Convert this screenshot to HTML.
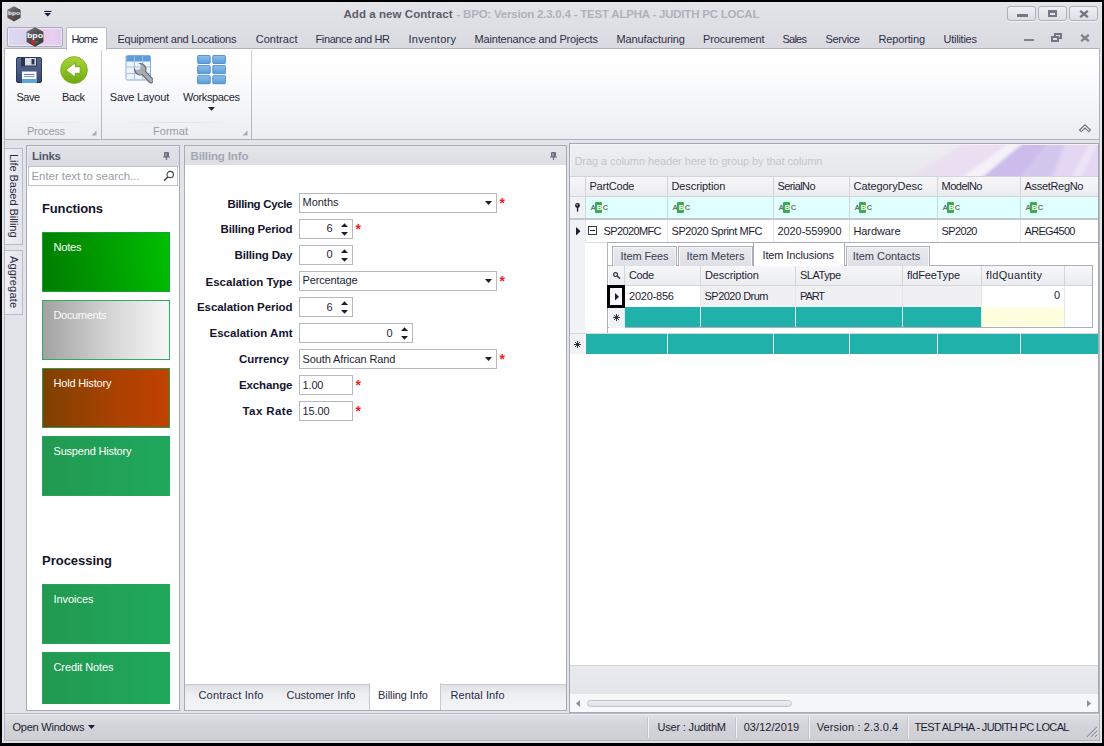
<!DOCTYPE html>
<html lang="en">
<head>
<meta charset="utf-8">
<title>Add a new Contract - BPO</title>
<style>
html,body{margin:0;padding:0;background:#000;}
body{width:1104px;height:746px;overflow:hidden;font-family:"Liberation Sans",sans-serif;font-size:11px;color:#1e1e32;}
#root{position:relative;width:1104px;height:746px;background:#000;overflow:hidden;}
#root div,#root span,#root svg{position:absolute;box-sizing:border-box;}
.tile{left:42px;width:129px;height:60px;border:1px solid #2aa05c;}
.fld{background:#fff;border:1px solid #b6b9c2;height:20px;}
.hdr{background:linear-gradient(#f7f7f9,#ebecf0);}
.vl{width:1px;background:#d3d5db;}
.teal{background:#20b2aa;}
</style>
</head>
<body>
<div id="root">
<div style="left:2px;top:2px;width:1100px;height:741px;background:#e3e4e9;border:1px solid #e6e7eb;border-bottom-color:#dddee3;"></div>
<div style="left:4px;top:48px;width:1096px;height:693px;border:1px solid #b4b6c0;border-top:none;"></div>
<div style="left:3px;top:3px;width:1098px;height:46px;background:linear-gradient(#e3e4e8,#d9dae0);"></div>
<svg style="left:6px;top:6px" width="16" height="16" viewBox="0 0 16 16"><defs><linearGradient id="hx" x1="0" y1="0" x2="0.6" y2="1"><stop offset="0" stop-color="#868686"/><stop offset="0.45" stop-color="#5e5e5e"/><stop offset="1" stop-color="#454545"/></linearGradient></defs><polygon points="8,0.3 14.6,3.8 14.6,11.8 8,15.5 1.4,11.8 1.4,3.8" fill="url(#hx)"/><text x="8" y="8.9" text-anchor="middle" font-family="Liberation Sans,sans-serif" font-weight="bold" font-size="4.8" textLength="12" lengthAdjust="spacingAndGlyphs" fill="#f2f2f2">bpo</text><rect x="4.6" y="10.6" width="2.4" height="1.8" fill="#b8323a"/></svg>
<svg style="left:44px;top:10px" width="8" height="7" viewBox="0 0 8 7"><rect x="0.2" y="0.9" width="7.2" height="1.1" fill="#1c1c3a"/><polygon points="0.4,2.9 7,2.9 3.7,6.6" fill="#1c1c3a"/></svg>
<span style="position:absolute;top:6px;height:16px;line-height:16px;font-size:11.5px;white-space:pre;color:#5a5e6b;font-weight:bold;left:343.5px;letter-spacing:0.060px;">Add a new Contract</span><span style="position:absolute;top:6px;height:16px;line-height:16px;font-size:11.5px;white-space:pre;color:#afb2bb;font-weight:bold;left:456.5px;letter-spacing:-0.215px;">- BPO: Version 2.3.0.4 - TEST ALPHA - JUDITH PC LOCAL</span><div style="left:1007px;top:6px;width:29px;height:15px;border:1px solid #adafba;border-radius:3px;background:linear-gradient(#eeeff2,#dddee4);box-shadow:0 1px 0 #f2f3f5;"></div>
<div style="left:1038px;top:6px;width:29px;height:15px;border:1px solid #adafba;border-radius:3px;background:linear-gradient(#eeeff2,#dddee4);box-shadow:0 1px 0 #f2f3f5;"></div>
<div style="left:1069px;top:6px;width:29px;height:15px;border:1px solid #adafba;border-radius:3px;background:linear-gradient(#eeeff2,#dddee4);box-shadow:0 1px 0 #f2f3f5;"></div>
<div style="left:1016.5px;top:14px;width:11px;height:3px;background:#747783;"></div>
<div style="left:1048px;top:10px;width:9px;height:7px;border:2px solid #747783;border-top-width:3px;"></div>
<svg style="left:1078.5px;top:9.5px" width="10" height="8" viewBox="0 0 10 8"><path d="M1.2 0.8 L8.8 7.2 M8.8 0.8 L1.2 7.2" stroke="#747783" stroke-width="2.3"/></svg>
<div style="left:1024px;top:38.5px;width:9.5px;height:2.5px;background:#7f828e;"></div>
<svg style="left:1051px;top:33px" width="11" height="9" viewBox="0 0 11 9"><rect x="4" y="1" width="6" height="4" fill="none" stroke="#747783" stroke-width="2"/><rect x="1" y="4" width="6" height="4" fill="#dddee4" stroke="#747783" stroke-width="2"/></svg>
<svg style="left:1080px;top:34px" width="10" height="8" viewBox="0 0 10 8"><path d="M1.2 0.8 L8.8 7.2 M8.8 0.8 L1.2 7.2" stroke="#7f828e" stroke-width="2.3"/></svg>
<div style="left:4px;top:48px;width:1096px;height:92px;background:linear-gradient(#ffffff 0%,#fdfdfe 25%,#f6f7f9 55%,#ecedf1 100%);border:1px solid #b0b2bc;border-radius:0 0 2px 2px;"></div>
<div style="left:7px;top:27px;width:56px;height:20px;border:1px solid #a9aab9;border-radius:2px;background:linear-gradient(90deg,#ddd9f2 0%,#dbd2ef 38%,#e9ccf0 62%,#e6cff0 85%,#dccaed 100%);box-shadow:inset 0 0 0 1px rgba(255,255,255,.45);"></div>
<svg style="left:26px;top:27px" width="18" height="20" viewBox="0 0 18 20"><defs><linearGradient id="hx2" x1="0" y1="0" x2="0.5" y2="1"><stop offset="0" stop-color="#7c7c7c"/><stop offset="0.4" stop-color="#555"/><stop offset="1" stop-color="#3c3c3c"/></linearGradient></defs><polygon points="9,0.3 17.4,4.8 17.4,15 9,19.8 0.6,15 0.6,4.8" fill="url(#hx2)"/><text x="9" y="11" text-anchor="middle" font-family="Liberation Sans,sans-serif" font-weight="bold" font-size="6.8" textLength="16" lengthAdjust="spacingAndGlyphs" fill="#ffffff">bpo</text><rect x="5" y="13" width="3.6" height="3.2" fill="#c42a36"/><rect x="9" y="14" width="3.4" height="2" fill="#2f7c68"/><rect x="6.5" y="16.2" width="3" height="1.6" fill="#c42a36"/></svg>
<div style="left:66px;top:27px;width:41px;height:23px;background:#fff;border:1px solid #b9bbc5;border-bottom:none;border-radius:2px 2px 0 0;"></div>
<span style="position:absolute;top:31px;height:16px;line-height:16px;font-size:11px;white-space:pre;color:#1e1e3c;left:71.5px;letter-spacing:-0.948px;">Home</span><span style="position:absolute;top:31px;height:16px;line-height:16px;font-size:11px;white-space:pre;color:#2f2f48;left:117.5px;letter-spacing:-0.234px;">Equipment and Locations</span><span style="position:absolute;top:31px;height:16px;line-height:16px;font-size:11px;white-space:pre;color:#2f2f48;left:255.7px;letter-spacing:0.032px;">Contract</span><span style="position:absolute;top:31px;height:16px;line-height:16px;font-size:11px;white-space:pre;color:#2f2f48;left:315.5px;letter-spacing:-0.385px;">Finance and HR</span><span style="position:absolute;top:31px;height:16px;line-height:16px;font-size:11px;white-space:pre;color:#2f2f48;left:408.5px;letter-spacing:0.281px;">Inventory</span><span style="position:absolute;top:31px;height:16px;line-height:16px;font-size:11px;white-space:pre;color:#2f2f48;left:474.5px;letter-spacing:-0.160px;">Maintenance and Projects</span><span style="position:absolute;top:31px;height:16px;line-height:16px;font-size:11px;white-space:pre;color:#2f2f48;left:616.5px;letter-spacing:-0.102px;">Manufacturing</span><span style="position:absolute;top:31px;height:16px;line-height:16px;font-size:11px;white-space:pre;color:#2f2f48;left:703px;letter-spacing:-0.148px;">Procurement</span><span style="position:absolute;top:31px;height:16px;line-height:16px;font-size:11px;white-space:pre;color:#2f2f48;left:782.5px;letter-spacing:-0.758px;">Sales</span><span style="position:absolute;top:31px;height:16px;line-height:16px;font-size:11px;white-space:pre;color:#2f2f48;left:825.5px;letter-spacing:-0.365px;">Service</span><span style="position:absolute;top:31px;height:16px;line-height:16px;font-size:11px;white-space:pre;color:#2f2f48;left:878.5px;letter-spacing:-0.150px;">Reporting</span><span style="position:absolute;top:31px;height:16px;line-height:16px;font-size:11px;white-space:pre;color:#2f2f48;left:943.5px;letter-spacing:-0.244px;">Utilities</span><div style="left:101px;top:50px;width:1px;height:89px;background:linear-gradient(#d3d5db,#bfc1c9 40%,#b2b4be);"></div>
<div style="left:251px;top:50px;width:1px;height:89px;background:linear-gradient(#d3d5db,#bfc1c9 40%,#b2b4be);"></div>
<div style="left:16px;top:122px;width:75px;height:1px;background:linear-gradient(90deg,#f3f4f6,#dfe1e6 50%,#f3f4f6);"></div>
<div style="left:112px;top:122px;width:130px;height:1px;background:linear-gradient(90deg,#f3f4f6,#dfe1e6 50%,#f3f4f6);"></div>
<span style="position:absolute;top:123px;height:16px;line-height:16px;font-size:11px;white-space:pre;color:#9a9da8;left:27px;letter-spacing:-0.292px;">Process</span><span style="position:absolute;top:123px;height:16px;line-height:16px;font-size:11px;white-space:pre;color:#9a9da8;left:153px;letter-spacing:0.031px;">Format</span><svg style="left:91px;top:130px" width="6" height="6" viewBox="0 0 6 6"><polygon points="5.5,0.5 5.5,5.5 0.5,5.5" fill="#a9acb6"/></svg>
<svg style="left:242px;top:130px" width="6" height="6" viewBox="0 0 6 6"><polygon points="5.5,0.5 5.5,5.5 0.5,5.5" fill="#a9acb6"/></svg>
<svg style="left:16px;top:57px" width="26" height="26" viewBox="0 0 26 26"><defs><linearGradient id="gs" x1="0" y1="0" x2="0" y2="1"><stop offset="0" stop-color="#55678f"/><stop offset="0.5" stop-color="#4a5b85"/><stop offset="1" stop-color="#36456c"/></linearGradient></defs><rect x="0.5" y="0.5" width="25" height="25" rx="1.5" fill="url(#gs)" stroke="#2c3858"/><rect x="5" y="0.5" width="16" height="9" fill="#2a3452"/><rect x="9" y="1" width="11" height="7.5" fill="#d9dee6"/><rect x="15.5" y="2" width="3" height="5.5" fill="#2a3452"/><rect x="6" y="14.5" width="14.5" height="11" fill="#fafbfd"/><rect x="6" y="22" width="14.5" height="3.5" fill="#5aa6dd"/><rect x="8" y="17" width="10.5" height="1" fill="#8070c4"/><rect x="8" y="19" width="10.5" height="1" fill="#6f9fd8"/></svg>
<span style="position:absolute;top:89px;height:16px;line-height:16px;font-size:11px;white-space:pre;color:#1e1e32;left:16.5px;letter-spacing:-0.526px;">Save</span><svg style="left:60px;top:56px" width="28" height="28" viewBox="0 0 28 28"><defs><linearGradient id="gb" x1="0" y1="0" x2="0" y2="1"><stop offset="0" stop-color="#a9d23a"/><stop offset="0.5" stop-color="#8dc21f"/><stop offset="1" stop-color="#6ea612"/></linearGradient></defs><circle cx="14" cy="14" r="13.4" fill="url(#gb)" stroke="#79ad22" stroke-width="0.8"/><polygon points="5.8,14 15.2,6.8 15.2,10.7 20.2,10.7 20.2,17.3 15.2,17.3 15.2,21.2" fill="#ffffff" stroke="#6f9f28" stroke-width="0.9" stroke-linejoin="round"/></svg>
<span style="position:absolute;top:89px;height:16px;line-height:16px;font-size:11px;white-space:pre;color:#1e1e32;left:62px;letter-spacing:-0.490px;">Back</span><svg style="left:125px;top:54px" width="30" height="31" viewBox="0 0 30 31"><defs><mask id="wm"><rect x="0" y="0" width="30" height="31" fill="#fff"/><circle cx="12.4" cy="12.6" r="3.3" fill="#000"/></mask></defs><rect x="1" y="1.5" width="24.5" height="24.5" rx="1.5" fill="#eef4fb" stroke="#86aedd"/><rect x="1.5" y="2" width="23.5" height="5.5" fill="#5d9ddb"/><path d="M1.5 13H25M1.5 19.5H25M9.4 2V25.5M17.7 2V25.5" stroke="#9fc0e6" stroke-width="1" fill="none"/><g mask="url(#wm)"><circle cx="15.3" cy="15.3" r="6.2" fill="#5f636c"/><path d="M16 16 L26 26.5" stroke="#5f636c" stroke-width="5.6" stroke-linecap="round"/><circle cx="15.3" cy="15.3" r="5.1" fill="#a7abb3"/><path d="M16 16 L26 26.5" stroke="#a7abb3" stroke-width="3.6" stroke-linecap="round"/><path d="M13 18.5 L24 29" stroke="#c9ccd2" stroke-width="1" stroke-linecap="round" opacity=".7"/></g></svg>
<span style="position:absolute;top:89px;height:16px;line-height:16px;font-size:11px;white-space:pre;color:#1e1e32;left:109.8px;letter-spacing:-0.166px;">Save Layout</span><svg style="left:197px;top:55px" width="29" height="30" viewBox="0 0 29 30"><defs><linearGradient id="gw" x1="0" y1="0" x2="0" y2="1"><stop offset="0" stop-color="#8fbfe9"/><stop offset="1" stop-color="#5a9bd8"/></linearGradient></defs><rect x="0.6" y="0.5" width="12.6" height="8" rx="0.8" fill="url(#gw)" stroke="#4a8cd0" stroke-width="0.9"/><rect x="15.8" y="0.5" width="12.6" height="8" rx="0.8" fill="url(#gw)" stroke="#4a8cd0" stroke-width="0.9"/><rect x="0.6" y="10.6" width="12.6" height="8" rx="0.8" fill="url(#gw)" stroke="#4a8cd0" stroke-width="0.9"/><rect x="15.8" y="10.6" width="12.6" height="8" rx="0.8" fill="url(#gw)" stroke="#4a8cd0" stroke-width="0.9"/><rect x="0.6" y="20.7" width="12.6" height="8" rx="0.8" fill="url(#gw)" stroke="#4a8cd0" stroke-width="0.9"/><rect x="15.8" y="20.7" width="12.6" height="8" rx="0.8" fill="url(#gw)" stroke="#4a8cd0" stroke-width="0.9"/></svg>
<span style="position:absolute;top:89px;height:16px;line-height:16px;font-size:11px;white-space:pre;color:#1e1e32;left:183px;letter-spacing:-0.370px;">Workspaces</span><svg style="left:208px;top:107px" width="7" height="4" viewBox="0 0 7 4"><polygon points="0,0 7,0 3.5,3.8" fill="#1c1c2e"/></svg>
<svg style="left:1078px;top:123px" width="14" height="11" viewBox="0 0 14 11"><path d="M1.5 7 L7 1.8 L12.5 7 L10.8 8.6 L7 5 L3.2 8.6 Z" fill="#f4f4f6" stroke="#6c6f7b" stroke-width="1.1"/></svg>
<div style="left:5px;top:148px;width:18px;height:97px;background:linear-gradient(90deg,#eeeff2,#e4e6ec);border:1px solid #b9bbc5;border-left:none;"></div>
<div style="left:5px;top:250px;width:18px;height:65px;background:linear-gradient(90deg,#eeeff2,#e4e6ec);border:1px solid #b9bbc5;border-left:none;"></div>
<span style="position:absolute;top:153.7px;height:16px;line-height:16px;font-size:11px;white-space:pre;color:#2a2a44;left:21.5px;letter-spacing:-0.052px;transform-origin:0 0;transform:rotate(90deg);">Life Based Billing</span><span style="position:absolute;top:256.2px;height:16px;line-height:16px;font-size:11px;white-space:pre;color:#2a2a44;left:21.5px;letter-spacing:0.154px;transform-origin:0 0;transform:rotate(90deg);">Aggregate</span><div style="left:26px;top:145px;width:154px;height:566px;background:#fff;border:1px solid #a8aab4;"></div>
<div style="left:27px;top:146px;width:152px;height:20px;background:linear-gradient(#e1e2e7,#dadbe0);border-top:1px solid #ececf0;border-left:1px solid #e9e9ee;"></div>
<span style="position:absolute;top:148px;height:16px;line-height:16px;font-size:11.5px;white-space:pre;color:#52566a;font-weight:bold;left:32px;letter-spacing:-0.262px;">Links</span><svg style="left:163px;top:152px" width="7" height="8" viewBox="0 0 7 8"><path d="M1.5 0.5H5.5V4.5H1.5Z" fill="#9498a6" stroke="#6a6e80" stroke-width="1"/><path d="M4.5 0.5V4.5M0 5H7M3.5 5V8" stroke="#6a6e80" stroke-width="1.2" fill="none"/></svg>
<div style="left:28px;top:166px;width:150px;height:20px;background:#fff;border:1px solid #c0c2cb;"></div>
<span style="position:absolute;top:168px;height:16px;line-height:16px;font-size:11.5px;white-space:pre;color:#9a9da8;left:31.5px;letter-spacing:-0.060px;">Enter text to search...</span><svg style="left:163px;top:170px" width="12" height="12" viewBox="0 0 12 12"><circle cx="7.2" cy="4.6" r="3.2" fill="none" stroke="#3a3c48" stroke-width="1.1"/><path d="M4.9 7 L1 10.8" stroke="#3a3c48" stroke-width="1.3"/></svg>
<span style="position:absolute;top:201px;height:16px;line-height:16px;font-size:13px;white-space:pre;color:#14142e;font-weight:bold;left:42px;letter-spacing:-0.139px;">Functions</span><div style="left:42px;top:232px;width:128px;height:60px;background:linear-gradient(80deg,#007c00 0%,#00a000 55%,#00c000 100%);border:1px solid #14a03c;"></div>
<span style="position:absolute;top:239px;height:16px;line-height:16px;font-size:11px;white-space:pre;color:#ffffff;left:53.5px;letter-spacing:-0.188px;">Notes</span><div style="left:42px;top:300px;width:128px;height:60px;background:linear-gradient(90deg,#a2a2a2 0%,#d6d6d6 55%,#f6f6f6 100%);border:1px solid #35a868;"></div>
<span style="position:absolute;top:307px;height:16px;line-height:16px;font-size:11px;white-space:pre;color:#fbfbfb;left:53.5px;letter-spacing:-0.330px;">Documents</span><div style="left:42px;top:368px;width:128px;height:60px;background:linear-gradient(90deg,#7e4100 0%,#a84100 55%,#c24100 100%);border:1px solid #2a9a56;"></div>
<span style="position:absolute;top:375px;height:16px;line-height:16px;font-size:11px;white-space:pre;color:#ffffff;left:53.5px;letter-spacing:-0.173px;">Hold History</span><div style="left:42px;top:436px;width:128px;height:60px;background:linear-gradient(90deg,#229951 0%,#1fa95d 100%);border:1px solid #27a25b;"></div>
<span style="position:absolute;top:443px;height:16px;line-height:16px;font-size:11px;white-space:pre;color:#ffffff;left:53.5px;letter-spacing:-0.194px;">Suspend History</span><span style="position:absolute;top:553px;height:16px;line-height:16px;font-size:13px;white-space:pre;color:#14142e;font-weight:bold;left:42px;letter-spacing:-0.010px;">Processing</span><div style="left:42px;top:584px;width:128px;height:60px;background:linear-gradient(90deg,#229951 0%,#1fa95d 100%);border:1px solid #27a25b;"></div>
<span style="position:absolute;top:591px;height:16px;line-height:16px;font-size:11px;white-space:pre;color:#ffffff;left:53.5px;letter-spacing:-0.051px;">Invoices</span><div style="left:42px;top:652px;width:128px;height:52px;background:linear-gradient(90deg,#229951 0%,#1fa95d 100%);border:1px solid #27a25b;border-bottom:none;"></div>
<span style="position:absolute;top:659px;height:16px;line-height:16px;font-size:11px;white-space:pre;color:#ffffff;left:53.5px;letter-spacing:-0.104px;">Credit Notes</span><div style="left:184px;top:145px;width:383px;height:566px;background:#fff;border:1px solid #a8aab4;"></div>
<div style="left:185px;top:146px;width:381px;height:19px;background:linear-gradient(#e4e5e9,#dedfe4);"></div>
<span style="position:absolute;top:148px;height:16px;line-height:16px;font-size:11.5px;white-space:pre;color:#a3a7b3;font-weight:bold;left:190.5px;letter-spacing:-0.128px;">Billing Info</span><svg style="left:549.5px;top:152px" width="7" height="8" viewBox="0 0 7 8"><path d="M1.5 0.5H5.5V4.5H1.5Z" fill="#9498a6" stroke="#6a6e80" stroke-width="1"/><path d="M4.5 0.5V4.5M0 5H7M3.5 5V8" stroke="#6a6e80" stroke-width="1.2" fill="none"/></svg>
<div style="left:185px;top:684px;width:381px;height:26px;background:linear-gradient(#dfe0e5,#eeeff2 40%,#f3f4f6);border-top:1px solid #c7c9d0;"></div>
<div style="left:369px;top:683px;width:72px;height:27px;background:#fff;border:1px solid #c7c9d0;border-top:none;border-bottom:none;"></div>
<span style="position:absolute;top:687px;height:16px;line-height:16px;font-size:11px;white-space:pre;color:#2a2a44;left:198.5px;letter-spacing:0.168px;">Contract Info</span><span style="position:absolute;top:687px;height:16px;line-height:16px;font-size:11px;white-space:pre;color:#2a2a44;left:286.5px;letter-spacing:-0.008px;">Customer Info</span><span style="position:absolute;top:687px;height:16px;line-height:16px;font-size:11px;white-space:pre;color:#2a2a44;left:378px;letter-spacing:-0.070px;">Billing Info</span><span style="position:absolute;top:687px;height:16px;line-height:16px;font-size:11px;white-space:pre;color:#2a2a44;left:450.5px;letter-spacing:0.080px;">Rental Info</span><span style="position:absolute;top:195.5px;height:16px;line-height:16px;font-size:11.5px;white-space:pre;color:#14142e;font-weight:bold;right:811.5px;letter-spacing:-0.336px;margin-right:0.336px;">Billing Cycle</span><div class="fld" style="left:299px;top:193px;width:198px;height:20px;"></div>
<span style="position:absolute;top:194.4px;height:16px;line-height:16px;font-size:11px;white-space:pre;color:#1e1e32;left:302.5px;letter-spacing:-0.016px;">Months</span><svg style="left:484.500px;top:201px" width="7" height="4" viewBox="0 0 7 4"><polygon points="0,0 7,0 3.5,4" fill="#1c1c2e"/></svg>
<span style="position:absolute;top:194.6px;height:16px;line-height:16px;font-size:14px;white-space:pre;color:#f21c1c;font-weight:bold;left:499.5px;">*</span><span style="position:absolute;top:220.6px;height:16px;line-height:16px;font-size:11.5px;white-space:pre;color:#14142e;font-weight:bold;right:811.5px;letter-spacing:-0.163px;margin-right:0.163px;">Billing Period</span><div class="fld" style="left:299px;top:219px;width:54px;height:20px;"></div>
<span style="position:absolute;top:220.4px;height:16px;line-height:16px;font-size:11px;white-space:pre;color:#1e1e32;right:771.5px;">6</span><svg style="left:341px;top:222.5px" width="7" height="13" viewBox="0 0 7 13"><polygon points="0,4 3.5,0.2 7,4" fill="#1c1c2e"/><polygon points="0,9 7,9 3.5,12.8" fill="#1c1c2e"/></svg>
<span style="position:absolute;top:220.6px;height:16px;line-height:16px;font-size:14px;white-space:pre;color:#f21c1c;font-weight:bold;left:355.5px;">*</span><span style="position:absolute;top:246.6px;height:16px;line-height:16px;font-size:11.5px;white-space:pre;color:#14142e;font-weight:bold;right:811.5px;letter-spacing:-0.144px;margin-right:0.144px;">Billing Day</span><div class="fld" style="left:299px;top:245px;width:54px;height:20px;"></div>
<span style="position:absolute;top:246.4px;height:16px;line-height:16px;font-size:11px;white-space:pre;color:#1e1e32;right:771.5px;">0</span><svg style="left:341px;top:248.5px" width="7" height="13" viewBox="0 0 7 13"><polygon points="0,4 3.5,0.2 7,4" fill="#1c1c2e"/><polygon points="0,9 7,9 3.5,12.8" fill="#1c1c2e"/></svg>
<span style="position:absolute;top:273.5px;height:16px;line-height:16px;font-size:11.5px;white-space:pre;color:#14142e;font-weight:bold;right:811.5px;letter-spacing:0.020px;margin-right:-0.020px;">Escalation Type</span><div class="fld" style="left:299px;top:271px;width:198px;height:20px;"></div>
<span style="position:absolute;top:272.4px;height:16px;line-height:16px;font-size:11px;white-space:pre;color:#1e1e32;left:302.5px;letter-spacing:-0.141px;">Percentage</span><svg style="left:484.500px;top:279px" width="7" height="4" viewBox="0 0 7 4"><polygon points="0,0 7,0 3.5,4" fill="#1c1c2e"/></svg>
<span style="position:absolute;top:272.6px;height:16px;line-height:16px;font-size:14px;white-space:pre;color:#f21c1c;font-weight:bold;left:499.5px;">*</span><span style="position:absolute;top:298.6px;height:16px;line-height:16px;font-size:11.5px;white-space:pre;color:#14142e;font-weight:bold;right:811.5px;letter-spacing:-0.063px;margin-right:0.063px;">Escalation Period</span><div class="fld" style="left:299px;top:297px;width:54px;height:20px;"></div>
<span style="position:absolute;top:298.9px;height:16px;line-height:16px;font-size:11px;white-space:pre;color:#1e1e32;right:771.5px;">6</span><svg style="left:341px;top:300.5px" width="7" height="13" viewBox="0 0 7 13"><polygon points="0,4 3.5,0.2 7,4" fill="#1c1c2e"/><polygon points="0,9 7,9 3.5,12.8" fill="#1c1c2e"/></svg>
<span style="position:absolute;top:324.6px;height:16px;line-height:16px;font-size:11.5px;white-space:pre;color:#14142e;font-weight:bold;right:811.5px;letter-spacing:0.026px;margin-right:-0.026px;">Escalation Amt</span><div class="fld" style="left:299px;top:323px;width:114px;height:20px;"></div>
<span style="position:absolute;top:324.9px;height:16px;line-height:16px;font-size:11px;white-space:pre;color:#1e1e32;right:711.5px;">0</span><svg style="left:401px;top:326.5px" width="7" height="13" viewBox="0 0 7 13"><polygon points="0,4 3.5,0.2 7,4" fill="#1c1c2e"/><polygon points="0,9 7,9 3.5,12.8" fill="#1c1c2e"/></svg>
<span style="position:absolute;top:350.6px;height:16px;line-height:16px;font-size:11.5px;white-space:pre;color:#14142e;font-weight:bold;right:815px;letter-spacing:-0.071px;margin-right:0.071px;">Currency</span><div class="fld" style="left:299px;top:349px;width:198px;height:20px;"></div>
<span style="position:absolute;top:350.9px;height:16px;line-height:16px;font-size:11px;white-space:pre;color:#1e1e32;left:302.5px;letter-spacing:-0.106px;">South African Rand</span><svg style="left:484.500px;top:357px" width="7" height="4" viewBox="0 0 7 4"><polygon points="0,0 7,0 3.5,4" fill="#1c1c2e"/></svg>
<span style="position:absolute;top:350.6px;height:16px;line-height:16px;font-size:14px;white-space:pre;color:#f21c1c;font-weight:bold;left:499.5px;">*</span><span style="position:absolute;top:376.6px;height:16px;line-height:16px;font-size:11.5px;white-space:pre;color:#14142e;font-weight:bold;right:811.5px;letter-spacing:-0.118px;margin-right:0.118px;">Exchange</span><div class="fld" style="left:299px;top:375px;width:54px;height:20px;"></div>
<span style="position:absolute;top:376.9px;height:16px;line-height:16px;font-size:11px;white-space:pre;color:#1e1e32;left:302.5px;letter-spacing:-0.141px;">1.00</span><span style="position:absolute;top:376.6px;height:16px;line-height:16px;font-size:14px;white-space:pre;color:#f21c1c;font-weight:bold;left:355.5px;">*</span><span style="position:absolute;top:402.6px;height:16px;line-height:16px;font-size:11.5px;white-space:pre;color:#14142e;font-weight:bold;right:811.5px;letter-spacing:0.415px;margin-right:-0.415px;">Tax Rate</span><div class="fld" style="left:299px;top:401px;width:54px;height:20px;"></div>
<span style="position:absolute;top:402.9px;height:16px;line-height:16px;font-size:11px;white-space:pre;color:#1e1e32;left:302.5px;letter-spacing:-0.133px;">15.00</span><span style="position:absolute;top:402.6px;height:16px;line-height:16px;font-size:14px;white-space:pre;color:#f21c1c;font-weight:bold;left:355.5px;">*</span><div style="left:569px;top:143px;width:530px;height:570px;background:#fff;border:1px solid #a6a8b3;"></div>
<div style="left:570px;top:144px;width:528px;height:32px;background:linear-gradient(#eeeff2,#e6e7eb);overflow:hidden;border-top:1px solid #f4f4f6;border-left:1px solid #f4f4f6;"><svg style="left:329px;top:-1px" width="198" height="32" viewBox="0 0 198 32"><defs><linearGradient id="gp" x1="0" y1="0" x2="1" y2="0"><stop offset="0" stop-color="#ecdff3" stop-opacity="0"/><stop offset="0.5" stop-color="#ecdff3" stop-opacity=".9"/><stop offset="1" stop-color="#e6daf3"/></linearGradient><filter id="bl" x="-10%" y="-30%" width="120%" height="160%"><feGaussianBlur stdDeviation="1.6"/></filter></defs><rect x="30" y="0" width="168" height="32" fill="url(#gp)"/><g filter="url(#bl)"><polygon points="70,-4 114,-4 58,36 4,36" fill="#ebdaf2" opacity=".6"/><polygon points="114,-4 127,-4 79,36 58,36" fill="#f4f1f8"/><polygon points="127,-4 166,-4 152,36 79,36" fill="#cbbcec"/><polygon points="150,-4 176,-4 160,36 118,36" fill="#d6c9ef" opacity=".8"/><polygon points="166,-4 202,-4 202,36 152,36" fill="#e3d7f3"/><polygon points="192,-4 199,-4 180,36 170,36" fill="#efe9f8" opacity=".8"/></g></svg></div>
<span style="position:absolute;top:153px;height:16px;line-height:16px;font-size:11px;white-space:pre;color:#c3c6cd;left:574.5px;letter-spacing:-0.082px;">Drag a column header here to group by that column</span><div class="hdr" style="left:570px;top:176px;width:528px;height:21px;border-top:1px solid #d3d5db;border-bottom:1px solid #d3d5db;"></div>
<div style="left:585px;top:197px;width:513px;height:21px;background:#e0ffff;"></div>
<div style="left:570px;top:197px;width:15px;height:21px;background:#f1f2f5;"></div>
<div style="left:570px;top:218px;width:528px;height:2px;background:#c4c6cd;"></div>
<div style="left:570px;top:220px;width:15px;height:134px;background:#f1f2f5;"></div>
<div class="vl" style="left:585px;top:177px;width:1px;height:41px;"></div>
<div style="left:585px;top:220px;width:1px;height:22px;background:#e4e5e9;"></div>
<span style="position:absolute;top:178.1px;height:16px;line-height:16px;font-size:11px;white-space:pre;color:#1e1e32;left:589.5px;letter-spacing:-0.212px;">PartCode</span><div style="left:595px;top:202px;width:7px;height:11px;background:#3cab4a;border-radius:1px;"></div>
<span style="position:absolute;top:199.7px;height:16px;line-height:16px;font-size:7.5px;white-space:pre;color:#5f7a6c;font-weight:bold;left:590.6px;font-family:"Liberation Mono",monospace;transform:scaleX(0.78);transform-origin:0 50%;">A</span><span style="position:absolute;top:199.7px;height:16px;line-height:16px;font-size:7.5px;white-space:pre;color:#ffffff;font-weight:bold;left:596.7px;font-family:"Liberation Mono",monospace;transform:scaleX(0.85);transform-origin:0 50%;">B</span><span style="position:absolute;top:199.7px;height:16px;line-height:16px;font-size:7.5px;white-space:pre;color:#5f7a6c;font-weight:bold;left:602.8px;font-family:"Liberation Mono",monospace;transform:scaleX(0.78);transform-origin:0 50%;">C</span><div class="vl" style="left:667px;top:177px;width:1px;height:41px;"></div>
<div style="left:667px;top:220px;width:1px;height:22px;background:#e4e5e9;"></div>
<span style="position:absolute;top:178.1px;height:16px;line-height:16px;font-size:11px;white-space:pre;color:#1e1e32;left:671.5px;letter-spacing:-0.103px;">Description</span><div style="left:677px;top:202px;width:7px;height:11px;background:#3cab4a;border-radius:1px;"></div>
<span style="position:absolute;top:199.7px;height:16px;line-height:16px;font-size:7.5px;white-space:pre;color:#5f7a6c;font-weight:bold;left:672.6px;font-family:"Liberation Mono",monospace;transform:scaleX(0.78);transform-origin:0 50%;">A</span><span style="position:absolute;top:199.7px;height:16px;line-height:16px;font-size:7.5px;white-space:pre;color:#ffffff;font-weight:bold;left:678.7px;font-family:"Liberation Mono",monospace;transform:scaleX(0.85);transform-origin:0 50%;">B</span><span style="position:absolute;top:199.7px;height:16px;line-height:16px;font-size:7.5px;white-space:pre;color:#5f7a6c;font-weight:bold;left:684.8px;font-family:"Liberation Mono",monospace;transform:scaleX(0.78);transform-origin:0 50%;">C</span><div class="vl" style="left:773px;top:177px;width:1px;height:41px;"></div>
<div style="left:773px;top:220px;width:1px;height:22px;background:#e4e5e9;"></div>
<span style="position:absolute;top:178.1px;height:16px;line-height:16px;font-size:11px;white-space:pre;color:#1e1e32;left:777.5px;letter-spacing:-0.598px;">SerialNo</span><div style="left:783px;top:202px;width:7px;height:11px;background:#3cab4a;border-radius:1px;"></div>
<span style="position:absolute;top:199.7px;height:16px;line-height:16px;font-size:7.5px;white-space:pre;color:#5f7a6c;font-weight:bold;left:778.6px;font-family:"Liberation Mono",monospace;transform:scaleX(0.78);transform-origin:0 50%;">A</span><span style="position:absolute;top:199.7px;height:16px;line-height:16px;font-size:7.5px;white-space:pre;color:#ffffff;font-weight:bold;left:784.7px;font-family:"Liberation Mono",monospace;transform:scaleX(0.85);transform-origin:0 50%;">B</span><span style="position:absolute;top:199.7px;height:16px;line-height:16px;font-size:7.5px;white-space:pre;color:#5f7a6c;font-weight:bold;left:790.8px;font-family:"Liberation Mono",monospace;transform:scaleX(0.78);transform-origin:0 50%;">C</span><div class="vl" style="left:849px;top:177px;width:1px;height:41px;"></div>
<div style="left:849px;top:220px;width:1px;height:22px;background:#e4e5e9;"></div>
<span style="position:absolute;top:178.1px;height:16px;line-height:16px;font-size:11px;white-space:pre;color:#1e1e32;left:853.5px;letter-spacing:-0.064px;">CategoryDesc</span><div style="left:859px;top:202px;width:7px;height:11px;background:#3cab4a;border-radius:1px;"></div>
<span style="position:absolute;top:199.7px;height:16px;line-height:16px;font-size:7.5px;white-space:pre;color:#5f7a6c;font-weight:bold;left:854.6px;font-family:"Liberation Mono",monospace;transform:scaleX(0.78);transform-origin:0 50%;">A</span><span style="position:absolute;top:199.7px;height:16px;line-height:16px;font-size:7.5px;white-space:pre;color:#ffffff;font-weight:bold;left:860.7px;font-family:"Liberation Mono",monospace;transform:scaleX(0.85);transform-origin:0 50%;">B</span><span style="position:absolute;top:199.7px;height:16px;line-height:16px;font-size:7.5px;white-space:pre;color:#5f7a6c;font-weight:bold;left:866.8px;font-family:"Liberation Mono",monospace;transform:scaleX(0.78);transform-origin:0 50%;">C</span><div class="vl" style="left:937px;top:177px;width:1px;height:41px;"></div>
<div style="left:937px;top:220px;width:1px;height:22px;background:#e4e5e9;"></div>
<span style="position:absolute;top:178.1px;height:16px;line-height:16px;font-size:11px;white-space:pre;color:#1e1e32;left:941.5px;letter-spacing:-0.505px;">ModelNo</span><div style="left:947px;top:202px;width:7px;height:11px;background:#3cab4a;border-radius:1px;"></div>
<span style="position:absolute;top:199.7px;height:16px;line-height:16px;font-size:7.5px;white-space:pre;color:#5f7a6c;font-weight:bold;left:942.6px;font-family:"Liberation Mono",monospace;transform:scaleX(0.78);transform-origin:0 50%;">A</span><span style="position:absolute;top:199.7px;height:16px;line-height:16px;font-size:7.5px;white-space:pre;color:#ffffff;font-weight:bold;left:948.7px;font-family:"Liberation Mono",monospace;transform:scaleX(0.85);transform-origin:0 50%;">B</span><span style="position:absolute;top:199.7px;height:16px;line-height:16px;font-size:7.5px;white-space:pre;color:#5f7a6c;font-weight:bold;left:954.8px;font-family:"Liberation Mono",monospace;transform:scaleX(0.78);transform-origin:0 50%;">C</span><div class="vl" style="left:1020px;top:177px;width:1px;height:41px;"></div>
<div style="left:1020px;top:220px;width:1px;height:22px;background:#e4e5e9;"></div>
<span style="position:absolute;top:178.1px;height:16px;line-height:16px;font-size:11px;white-space:pre;color:#1e1e32;left:1024.5px;letter-spacing:-0.307px;">AssetRegNo</span><div style="left:1030px;top:202px;width:7px;height:11px;background:#3cab4a;border-radius:1px;"></div>
<span style="position:absolute;top:199.7px;height:16px;line-height:16px;font-size:7.5px;white-space:pre;color:#5f7a6c;font-weight:bold;left:1025.6px;font-family:"Liberation Mono",monospace;transform:scaleX(0.78);transform-origin:0 50%;">A</span><span style="position:absolute;top:199.7px;height:16px;line-height:16px;font-size:7.5px;white-space:pre;color:#ffffff;font-weight:bold;left:1031.7px;font-family:"Liberation Mono",monospace;transform:scaleX(0.85);transform-origin:0 50%;">B</span><span style="position:absolute;top:199.7px;height:16px;line-height:16px;font-size:7.5px;white-space:pre;color:#5f7a6c;font-weight:bold;left:1037.8px;font-family:"Liberation Mono",monospace;transform:scaleX(0.78);transform-origin:0 50%;">C</span><svg style="left:575px;top:203px" width="5" height="9" viewBox="0 0 5 9"><circle cx="2.5" cy="2.5" r="2.4" fill="#1c1c2e"/><circle cx="2.2" cy="2" r="0.8" fill="#f1f2f5"/><rect x="1.9" y="4" width="1.3" height="4.6" fill="#1c1c2e"/></svg>
<div style="left:585px;top:242px;width:513px;height:1px;background:#dcdde2;"></div>
<svg style="left:576px;top:227px" width="4.500" height="8.500" viewBox="0 0 4.5 8.5"><polygon points="0,0 4.5,4.25 0,8.5" fill="#1c1c2e"/></svg>
<div style="left:588px;top:226px;width:9px;height:9px;border:1px solid #3a3a4c;background:#fff;"><div style="left:1px;top:3px;width:5px;height:1px;background:#1c1c2e"></div></div>
<span style="position:absolute;top:223px;height:16px;line-height:16px;font-size:11px;white-space:pre;color:#1e1e32;left:603.5px;letter-spacing:-0.623px;">SP2020MFC</span><span style="position:absolute;top:223px;height:16px;line-height:16px;font-size:11px;white-space:pre;color:#1e1e32;left:671.5px;letter-spacing:-0.427px;">SP2020 Sprint MFC</span><span style="position:absolute;top:223px;height:16px;line-height:16px;font-size:11px;white-space:pre;color:#1e1e32;left:777.5px;letter-spacing:-0.084px;">2020-559900</span><span style="position:absolute;top:223px;height:16px;line-height:16px;font-size:11px;white-space:pre;color:#1e1e32;left:853.5px;letter-spacing:-0.098px;">Hardware</span><span style="position:absolute;top:223px;height:16px;line-height:16px;font-size:11px;white-space:pre;color:#1e1e32;left:941.5px;letter-spacing:-0.631px;">SP2020</span><span style="position:absolute;top:223px;height:16px;line-height:16px;font-size:11px;white-space:pre;color:#1e1e32;left:1024.5px;letter-spacing:-0.665px;">AREG4500</span><div style="left:607px;top:242px;width:491px;height:92px;background:#fff;border-left:1px solid #b4b6c0;border-top:1px solid #a9abb5;"></div>
<div style="left:607px;top:265px;width:486px;height:63px;background:#fff;border:1px solid #adafb9;"></div>
<div style="left:612px;top:246px;width:65px;height:20px;background:linear-gradient(#e9eaee,#dfe0e5);border:1px solid #adafb9;border-bottom:none;box-shadow:inset 1px 1px 0 #f5f5f8,inset -1px 0 0 #f5f5f8;"></div>
<span style="position:absolute;top:248px;height:16px;line-height:16px;font-size:11px;white-space:pre;color:#3a3a50;left:620.5px;letter-spacing:-0.113px;">Item Fees</span><div style="left:678px;top:246px;width:75px;height:20px;background:linear-gradient(#e9eaee,#dfe0e5);border:1px solid #adafb9;border-bottom:none;box-shadow:inset 1px 1px 0 #f5f5f8,inset -1px 0 0 #f5f5f8;"></div>
<span style="position:absolute;top:248px;height:16px;line-height:16px;font-size:11px;white-space:pre;color:#3a3a50;left:686.5px;letter-spacing:-0.008px;">Item Meters</span><div style="left:846px;top:246px;width:84px;height:20px;background:linear-gradient(#e9eaee,#dfe0e5);border:1px solid #adafb9;border-bottom:none;box-shadow:inset 1px 1px 0 #f5f5f8,inset -1px 0 0 #f5f5f8;"></div>
<span style="position:absolute;top:248px;height:16px;line-height:16px;font-size:11px;white-space:pre;color:#3a3a50;left:852.7px;letter-spacing:-0.030px;">Item Contacts</span><div style="left:753px;top:242px;width:92px;height:24px;background:#fff;border:1px solid #a9abb5;border-bottom:none;"></div>
<span style="position:absolute;top:247px;height:16px;line-height:16px;font-size:11px;white-space:pre;color:#1e1e32;left:762.5px;letter-spacing:-0.134px;">Item Inclusions</span><div class="hdr" style="left:609px;top:266px;width:483px;height:20px;border-bottom:1px solid #d3d5db;"></div>
<div style="left:625px;top:286px;width:76px;height:21px;background:#fff;"></div>
<div style="left:701px;top:286px;width:280px;height:21px;background:#f0f0f3;"></div>
<div style="left:982px;top:286px;width:82px;height:21px;background:#fff;"></div>
<div style="left:609px;top:286px;width:16px;height:42px;background:#f1f2f5;"></div>
<div class="teal" style="left:625px;top:307px;width:357px;height:20px;"></div>
<div style="left:982px;top:307px;width:82px;height:20px;background:#ffffe0;"></div>
<div class="vl" style="left:624px;top:266px;width:1px;height:20px;"></div>
<div style="left:624px;top:286px;width:1px;height:41px;background:#e6e7eb;"></div>
<span style="position:absolute;top:267px;height:16px;line-height:16px;font-size:11px;white-space:pre;color:#1e1e32;left:629px;letter-spacing:-0.432px;">Code</span><div class="vl" style="left:700px;top:266px;width:1px;height:20px;"></div>
<div style="left:700px;top:286px;width:1px;height:41px;background:#e6e7eb;"></div>
<span style="position:absolute;top:267px;height:16px;line-height:16px;font-size:11px;white-space:pre;color:#1e1e32;left:705px;letter-spacing:-0.103px;">Description</span><div class="vl" style="left:795px;top:266px;width:1px;height:20px;"></div>
<div style="left:795px;top:286px;width:1px;height:41px;background:#e6e7eb;"></div>
<span style="position:absolute;top:267px;height:16px;line-height:16px;font-size:11px;white-space:pre;color:#1e1e32;left:800px;letter-spacing:-0.471px;">SLAType</span><div class="vl" style="left:902px;top:266px;width:1px;height:20px;"></div>
<div style="left:902px;top:286px;width:1px;height:41px;background:#e6e7eb;"></div>
<span style="position:absolute;top:267px;height:16px;line-height:16px;font-size:11px;white-space:pre;color:#1e1e32;left:907px;letter-spacing:-0.158px;">fldFeeType</span><div class="vl" style="left:981px;top:266px;width:1px;height:20px;"></div>
<div style="left:981px;top:286px;width:1px;height:41px;background:#e6e7eb;"></div>
<span style="position:absolute;top:267px;height:16px;line-height:16px;font-size:11px;white-space:pre;color:#1e1e32;left:986px;letter-spacing:0.341px;">fldQuantity</span><div class="vl" style="left:1064px;top:266px;width:1px;height:20px;"></div>
<div style="left:1064px;top:286px;width:1px;height:41px;background:#e6e7eb;"></div>
<div style="left:607px;top:285px;width:18px;height:23px;border:3px solid #000;background:#f6f6f8;"></div>
<svg style="left:615px;top:293px" width="4" height="7.500" viewBox="0 0 4 7.5"><polygon points="0,0 4,3.75 0,7.5" fill="#1c1c2e"/></svg>
<svg style="left:613px;top:271.500px" width="8" height="7" viewBox="0 0 8 7"><circle cx="2.6" cy="2.6" r="1.9" fill="none" stroke="#2e303c" stroke-width="1.2"/><path d="M4 4 L7 6.6" stroke="#2e303c" stroke-width="1.5"/></svg>
<span style="position:absolute;top:287.5px;height:16px;line-height:16px;font-size:11px;white-space:pre;color:#1e1e32;left:629px;letter-spacing:-0.214px;">2020-856</span><span style="position:absolute;top:287.5px;height:16px;line-height:16px;font-size:11px;white-space:pre;color:#1e1e32;left:704.5px;letter-spacing:-0.509px;">SP2020 Drum</span><span style="position:absolute;top:287.5px;height:16px;line-height:16px;font-size:11px;white-space:pre;color:#1e1e32;left:800px;letter-spacing:-1.109px;">PART</span><span style="position:absolute;top:287.3px;height:16px;line-height:16px;font-size:11px;white-space:pre;color:#1e1e32;right:44px;">0</span><svg style="left:613px;top:314px" width="7" height="7" viewBox="0 0 7 7"><path d="M3.5 0V7M0 3.5H7M1 1L6 6M6 1L1 6" stroke="#1c1c2e" stroke-width="0.9"/></svg>
<div style="left:570px;top:333px;width:528px;height:1px;background:#d6d7dc;"></div>
<div class="teal" style="left:586px;top:334px;width:512px;height:20px;"></div>
<div style="left:667px;top:334px;width:1px;height:20px;background:#e8f4f3;"></div>
<div style="left:773px;top:334px;width:1px;height:20px;background:#e8f4f3;"></div>
<div style="left:849px;top:334px;width:1px;height:20px;background:#e8f4f3;"></div>
<div style="left:937px;top:334px;width:1px;height:20px;background:#e8f4f3;"></div>
<div style="left:1020px;top:334px;width:1px;height:20px;background:#e8f4f3;"></div>
<svg style="left:574px;top:341px" width="7" height="7" viewBox="0 0 7 7"><path d="M3.5 0V7M0 3.5H7M1 1L6 6M6 1L1 6" stroke="#1c1c2e" stroke-width="0.9"/></svg>
<div style="left:570px;top:665px;width:528px;height:29px;background:linear-gradient(#eaebef,#e4e5ea);border-top:1px solid #d3d5db;"></div>
<div style="left:570px;top:694px;width:528px;height:18px;background:#f6f7f9;"></div>
<div style="left:587px;top:700px;width:205px;height:7px;background:linear-gradient(#eceef2,#dfe1e7);border:1px solid #c1c3cc;border-radius:4px;"></div>
<svg style="left:576px;top:700px" width="4" height="7" viewBox="0 0 4 7"><polygon points="4,0 0,3.5 4,7" fill="#8d909c"/></svg>
<svg style="left:1087px;top:700px" width="4" height="7" viewBox="0 0 4 7"><polygon points="0,0 4,3.5 0,7" fill="#8d909c"/></svg>
<div style="left:5px;top:713px;width:1094px;height:27px;background:linear-gradient(#dfe0e5 0%,#d2d3d9 50%,#cfd0d6 100%);border-top:1px solid #b9bbc4;box-shadow:inset 0 1px 0 #ebecef;"></div>
<span style="position:absolute;top:719px;height:16px;line-height:16px;font-size:11px;white-space:pre;color:#1e1e32;left:12.5px;letter-spacing:-0.236px;">Open Windows</span><svg style="left:88px;top:725px" width="7" height="4" viewBox="0 0 7 4"><polygon points="0,0 7,0 3.5,4" fill="#1c1c2e"/></svg>
<div style="left:647px;top:717px;width:1px;height:21px;background:#c3c5cd;"></div>
<div style="left:648px;top:717px;width:1px;height:21px;background:#f1f2f5;"></div>
<div style="left:735px;top:717px;width:1px;height:21px;background:#c3c5cd;"></div>
<div style="left:736px;top:717px;width:1px;height:21px;background:#f1f2f5;"></div>
<div style="left:808px;top:717px;width:1px;height:21px;background:#c3c5cd;"></div>
<div style="left:809px;top:717px;width:1px;height:21px;background:#f1f2f5;"></div>
<div style="left:907px;top:717px;width:1px;height:21px;background:#c3c5cd;"></div>
<div style="left:908px;top:717px;width:1px;height:21px;background:#f1f2f5;"></div>
<span style="position:absolute;top:719px;height:16px;line-height:16px;font-size:11px;white-space:pre;color:#1e1e32;left:657.5px;letter-spacing:-0.186px;">User : JudithM</span><span style="position:absolute;top:719px;height:16px;line-height:16px;font-size:11px;white-space:pre;color:#1e1e32;left:743.7px;letter-spacing:0.049px;">03/12/2019</span><span style="position:absolute;top:719px;height:16px;line-height:16px;font-size:11px;white-space:pre;color:#1e1e32;left:816.7px;letter-spacing:0.125px;">Version : 2.3.0.4</span><span style="position:absolute;top:719px;height:16px;line-height:16px;font-size:11px;white-space:pre;color:#1e1e32;left:914.5px;letter-spacing:-0.637px;">TEST ALPHA - JUDITH PC LOCAL</span><svg style="left:1086px;top:726px" width="12" height="12" viewBox="0 0 12 12"><path d="M11.5 1.5L1.5 11.5M11.5 5.5L5.5 11.5M11.5 9.5L9.5 11.5" stroke="#f4f4f6" stroke-width="1.2"/><path d="M11 1L1 11M11 5L5 11M11 9L9 11" stroke="#8e909b" stroke-width="1.1"/></svg>

</div>
</body>
</html>
